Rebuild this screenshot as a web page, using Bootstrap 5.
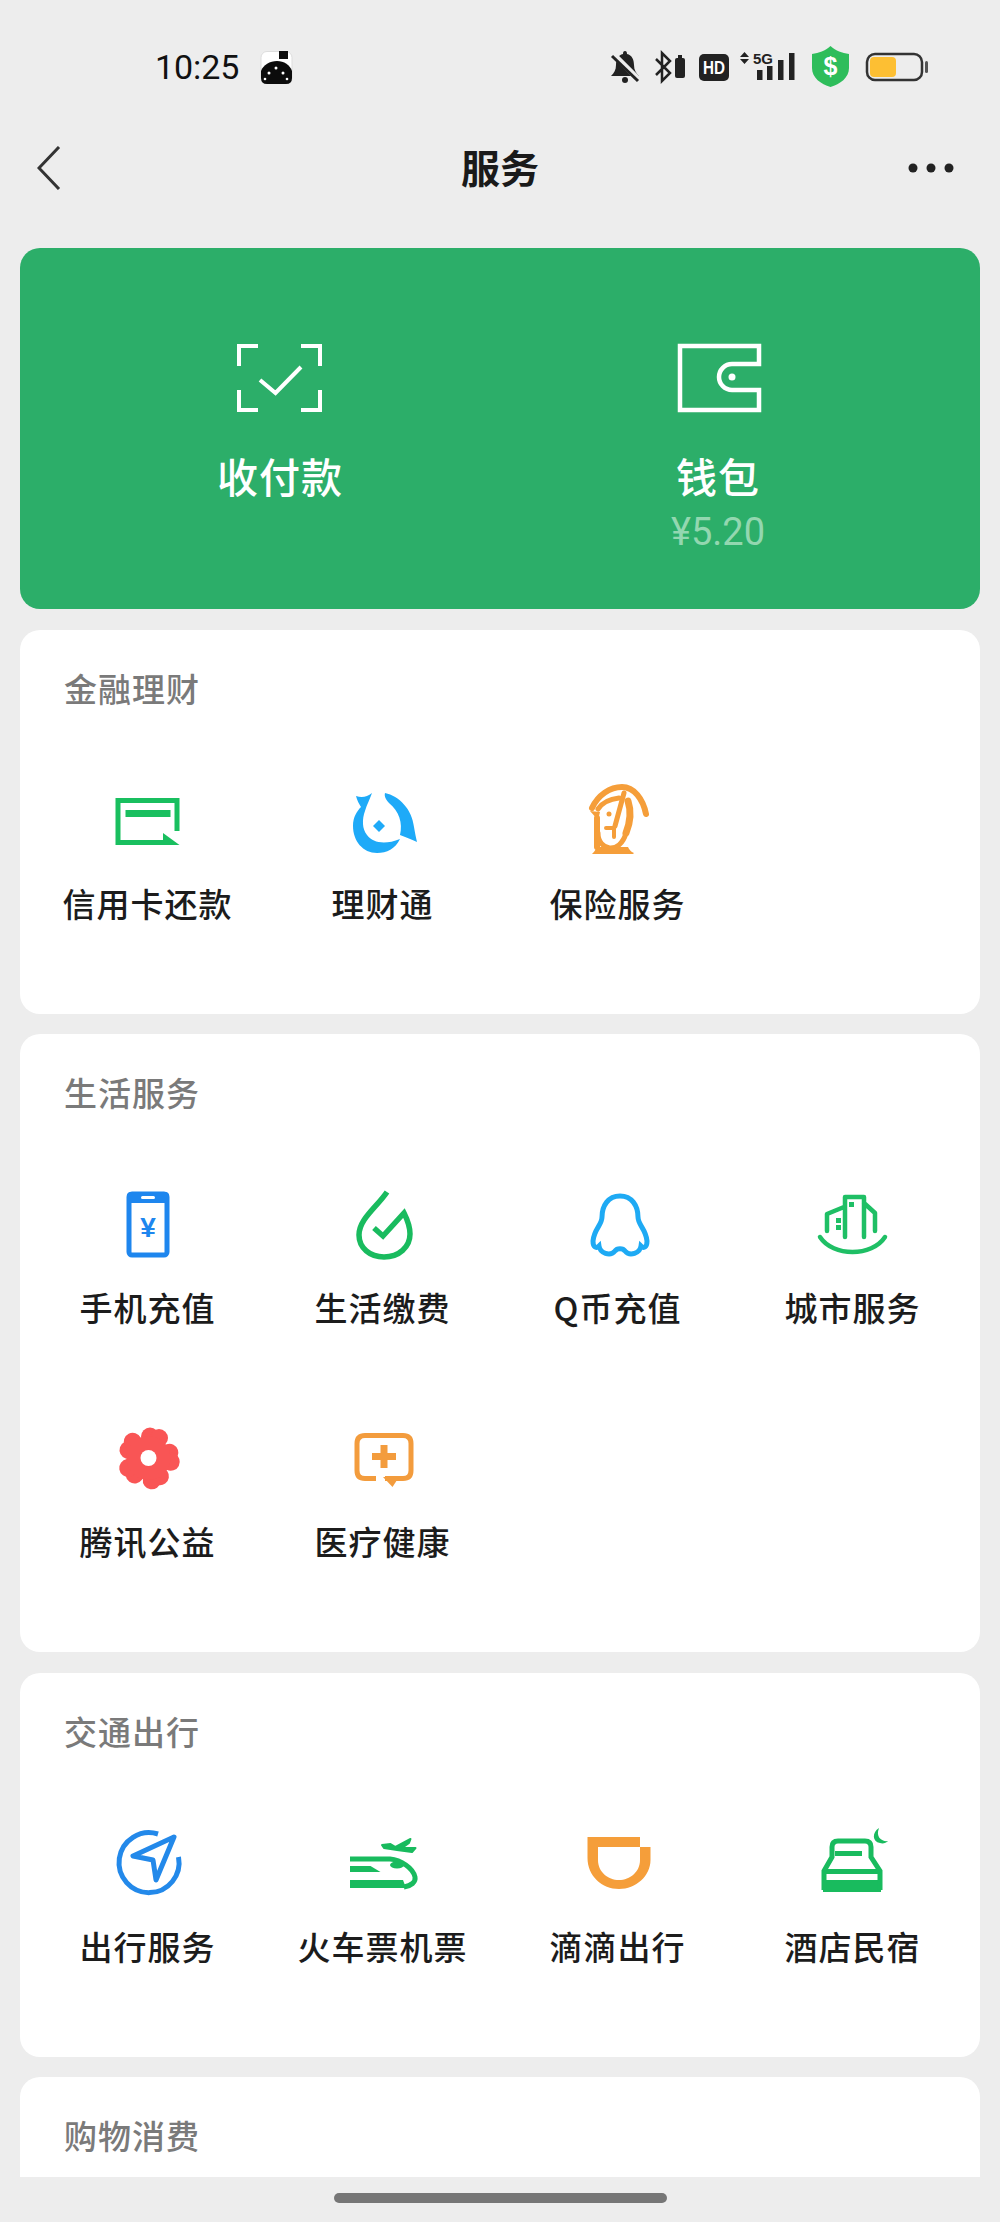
<!DOCTYPE html>
<html lang="zh-CN">
<head>
<meta charset="utf-8">
<title>服务</title>
<link href="https://cdn.jsdelivr.net/npm/bootstrap@5.3.0/dist/css/bootstrap.min.css" rel="stylesheet">
<style>
html,body{height:2222px;overflow:hidden;background:#ededed;}
body{font-family:"Noto Sans CJK SC","Noto Sans",sans-serif;color:#1a1a1a;}
.page-shell{height:2222px;}
.status-strip{height:100px;padding:34px 70px 0 155px;}
.clock-text{font-family:Roboto,"Liberation Sans",sans-serif;font-size:34px;line-height:40px;letter-spacing:-.1px;color:#111;}
.robot-icon{width:33px;height:33px;margin-left:21px;}
.title-strip{height:136px;}
.side-slot{width:120px;}
.side-left{padding-left:37px;}
.side-right{padding-right:46px;}
.page-title{font-size:39px;line-height:44px;font-weight:700;color:#1a1a1a;padding-bottom:5px;}
.cards-area{margin:12px 20px 0;gap:20.5px;overflow:hidden;height:1929px;}
.wallet-panel{background:#2cae69;border-radius:20px;padding:80px 43px 57px 41px;flex:none;color:#fff;}
.panel-label{font-size:41px;line-height:40px;margin-top:27px;font-weight:500;color:#fff;letter-spacing:1px;}
.panel-amount{font-family:Roboto,"Liberation Sans",sans-serif;font-size:38px;line-height:40px;margin-top:17px;color:#93d7b0;}
.svc-panel{border-radius:20px;padding:38px 10px 88px;flex:none;background:#fff;}
.svc-heading{font-size:33px;line-height:40px;margin:0 0 63px 34px;color:#7a7a7a;font-weight:500;letter-spacing:1px;}
.svc-rows{row-gap:79px;}
.svc-icon{width:100px;height:100px;display:block;}
.svc-label{font-size:33px;line-height:40px;margin-top:12px;margin-bottom:3px;white-space:nowrap;font-weight:500;color:#1c1c1c;letter-spacing:1px;}
.home-strip{height:45px;padding-top:16px;}
.home-pill{width:333px;height:10px;border-radius:5px;background:#767676;}
</style>
</head>
<body>
<div class="page-shell d-flex flex-column">

  <div class="status-strip d-flex align-items-center justify-content-between">
    <div class="d-flex align-items-center">
      <span class="clock-text">10:25</span>
      <svg class="robot-icon" viewBox="0 0 33 33">
        <rect x="1" y="0.5" width="31" height="32" rx="6" fill="#fff" stroke="#ddd" stroke-width="1"/>
        <path d="M1 20 C3 14 10 10 17 10 C24 10 30 14 32 20 V27 Q32 33 26 33 H7 Q1 33 1 27Z" fill="#0c0c0c"/>
        <rect x="19" y="0" width="9" height="8" fill="#0c0c0c"/>
        <circle cx="16" cy="17" r="1.500" fill="#fff"/><circle cx="9" cy="22" r="1.500" fill="#fff"/><circle cx="23" cy="22" r="1.500" fill="#fff"/><circle cx="5" cy="28" r="1.300" fill="#fff"/><circle cx="27" cy="28" r="1.300" fill="#fff"/>
      </svg>
    </div>
    <svg width="320" height="50" viewBox="0 0 320 50">
      <path d="M15 9 C16.500 9 17 10 17 12 C22 13 24 18 24 23 C24 28 26 31 29 34 H1 C4 31 6 28 6 23 C6 18 8 13 13 12 C13 10 13.500 9 15 9Z" fill="#222"/>
      <circle cx="15" cy="38" r="3" fill="#222"/>
      <path d="M3 12 L29 38" stroke="#ededed" stroke-width="6"/>
      <path d="M2 14 L28 39" stroke="#222" stroke-width="3"/>
      <path d="M46 17 L60 31 L52 39 V11 L60 19 L46 33" stroke="#222" stroke-width="2.500" fill="none"/>
      <rect x="65" y="16" width="10" height="20" rx="2" fill="#222"/><rect x="68" y="13" width="4" height="4" fill="#222"/>
      <rect x="89" y="12" width="30" height="27" rx="5" fill="#222"/>
      <text x="104" y="32" text-anchor="middle" font-family="Liberation Sans" font-weight="700" font-size="19" textLength="22" lengthAdjust="spacingAndGlyphs" fill="#fff">HD</text>
      <path d="M134.500 10 L139 15 H130Z M130 17 H139 L134.500 22Z" fill="#222"/>
      <text x="143" y="22" font-family="Liberation Sans" font-weight="700" font-size="15" textLength="20" lengthAdjust="spacingAndGlyphs" fill="#222">5G</text>
      <rect x="147" y="28" width="5.500" height="10" fill="#222"/><rect x="157" y="24" width="5.500" height="14" fill="#222"/><rect x="168" y="18" width="5.500" height="20" fill="#222"/><rect x="179" y="11" width="5.500" height="27" fill="#222"/>
      <path d="M220.500 4 C226 9 232 11 239 12 V26 C239 36 230 42 220.500 45 C211 42 202 36 202 26 V12 C209 11 215 9 220.500 4Z" fill="#2ebd5b"/>
      <text x="220.500" y="33" text-anchor="middle" font-family="Liberation Sans" font-weight="700" font-size="25" fill="#fff">$</text>
      <rect x="257" y="12" width="55" height="26" rx="8" fill="none" stroke="#333" stroke-width="2.500"/>
      <rect x="260" y="15" width="26" height="20" rx="4" fill="#fdbf33"/>
      <rect x="315" y="19" width="3" height="12" rx="1.500" fill="#555"/>
    </svg>
  </div>

  <div class="title-strip d-flex align-items-center">
    <div class="side-slot side-left">
      <svg class="d-block" width="24" height="44" viewBox="0 0 24 44"><path d="M22 1 L2 22 L22 43" fill="none" stroke="#333" stroke-width="3"/></svg>
    </div>
    <div class="flex-grow-1 text-center page-title">服务</div>
    <div class="side-slot side-right d-flex justify-content-end gap-2">
      <svg width="46" height="12" viewBox="0 0 46 12"><circle cx="5" cy="6" r="4.500" fill="#222"/><circle cx="23" cy="6" r="4.500" fill="#222"/><circle cx="41" cy="6" r="4.500" fill="#222"/></svg>
    </div>
  </div>

  <main class="cards-area d-flex flex-column">

    <section class="wallet-panel row g-0">
      <div class="col-6 d-flex flex-column align-items-center">
        <svg class="svc-icon" viewBox="0 0 100 100"><g fill="none" stroke="#fff" stroke-width="4"><path d="M9 38 V18 H28 M71 18 H90 V38 M9 62 V82 H28 M71 82 H90 V62"/><path d="M30 52 L45.500 65 L71 39"/></g></svg>
        <div class="panel-label">收付款</div>
      </div>
      <div class="col-6 d-flex flex-column align-items-center">
        <svg class="svc-icon" viewBox="0 0 100 100"><path d="M91 36 V18 H12 V82 H91 V62 H64 A13 13 0 0 1 64 36 Z" fill="none" stroke="#fff" stroke-width="4.500"/><circle cx="64" cy="49" r="3.500" fill="#fff"/></svg>
        <div class="panel-label">钱包</div>
        <div class="panel-amount">¥5.20</div>
      </div>
    </section>

    <section class="svc-panel">
      <h2 class="svc-heading">金融理财</h2>
      <div class="row row-cols-4 g-0 svc-rows">
        <div class="col d-flex flex-column align-items-center">
          <svg class="svc-icon" viewBox="0 0 100 100"><path d="M79 60 V29.500 H20 V71.500 H66" fill="none" stroke="#19bf5f" stroke-width="5"/><rect x="27.500" y="39" width="45" height="7" fill="#19bf5f"/><path d="M65 62 L81.500 74 H65Z" fill="#19bf5f"/></svg>
          <div class="svc-label">信用卡还款</div>
        </div>
        <div class="col d-flex flex-column align-items-center">
          <svg class="svc-icon" viewBox="0 0 100 100"><g fill="#1eaaf8"><path d="M52 22 C66 25 79 38 81 56 C82 62 83 67 84 71 C79 69 73 66 67 64 C70 52 66 40 56 32 C53 29 51 25 52 22Z"/><path d="M23 25 C29 27 34 26 39 22 C37 28 34 33 32 40 C29 48 29 58 34 64 C40 72 52 74 67 68 C62 78 54 82 44 82 C30 82 20 70 20 55 C20 46 24 40 28 36 C26 33 24 29 23 25Z"/><path d="M46 49 L52 55 46 61 40 55Z"/></g></svg>
          <div class="svc-label">理财通</div>
        </div>
        <div class="col d-flex flex-column align-items-center">
          <svg class="svc-icon" viewBox="0 0 100 100"><g fill="none" stroke="#f59e3a" stroke-linecap="round"><path d="M24 37 C30 24 42 16 54 16 C66 16 75 28 78 43" stroke-width="6"/><path d="M30 38 C34 32 42 28 51 27" stroke-width="5"/><path d="M56 22 L47 55" stroke-width="5"/><path d="M38 57 H46 V66" stroke-width="4"/><path d="M29 47 V76" stroke-width="6"/><path d="M60 30 C64 42 62 52 58 62" stroke-width="7"/><path d="M30 62 C30 80 52 84 58 62" stroke-width="5"/></g><g fill="#f59e3a"><path d="M22 40 L32 41 L30 49Z"/><circle cx="41" cy="43" r="2.500"/><path d="M24 83 C27 80 28 78 28 76 H60 C61 78 63 81 66 82 L65 83Z"/></g></svg>
          <div class="svc-label">保险服务</div>
        </div>
      </div>
    </section>

    <section class="svc-panel">
      <h2 class="svc-heading">生活服务</h2>
      <div class="row row-cols-4 g-0 svc-rows">
        <div class="col d-flex flex-column align-items-center">
          <svg class="svc-icon" viewBox="0 0 100 100"><rect x="31" y="19" width="38" height="61" rx="3" fill="#fff" stroke="#1e86ee" stroke-width="5"/><path d="M29 28 V21 Q29 17 33 17 H67 Q71 17 71 21 V28Z" fill="#1e86ee"/><rect x="43" y="21" width="14" height="3" rx="1.500" fill="#fff"/><text x="50" y="62" text-anchor="middle" font-family="Liberation Sans" font-weight="700" font-size="28" fill="#1e86ee">¥</text></svg>
          <div class="svc-label">手机充值</div>
        </div>
        <div class="col d-flex flex-column align-items-center">
          <svg class="svc-icon" viewBox="0 0 100 100"><path d="M54 17 C44 32 26 44 26 60 C26 73 37 82 51 82 C66 82 77 72 77 59 C77 52 74 44 71 38 L50 61 L41 53" fill="none" stroke="#19bb5e" stroke-width="5.500"/></svg>
          <div class="svc-label">生活缴费</div>
        </div>
        <div class="col d-flex flex-column align-items-center">
          <svg class="svc-icon" viewBox="0 0 100 100"><path d="M52 21 C40 21 34 31 34 42 C34 50 26 54 25 66 C25 72 28 74 31 71 C32 78 42 82 47 76 C49 73 55 73 57 76 C62 82 72 78 73 71 C76 74 79 72 79 66 C78 54 70 50 70 42 C70 31 64 21 52 21Z" fill="none" stroke="#1eaaf4" stroke-width="5"/></svg>
          <div class="svc-label">Q币充值</div>
        </div>
        <div class="col d-flex flex-column align-items-center">
          <svg class="svc-icon" viewBox="0 0 100 100"><g fill="none" stroke="#1fbf65" stroke-width="4.500" stroke-linecap="round" stroke-linejoin="round"><path d="M17 62 C30 82 69 82 82 62"/><path d="M42 62 V22 H61 V62 M61 28 L72 38 V56 M24 56 V39 L41 32"/></g><g fill="#1fbf65"><rect x="46" y="27" width="5" height="5"/><rect x="33" y="43" width="5" height="5"/><rect x="33" y="50" width="5" height="5"/></g></svg>
          <div class="svc-label">城市服务</div>
        </div>
        <div class="col d-flex flex-column align-items-center">
          <svg class="svc-icon" viewBox="0 0 100 100"><defs><g id="flower-petal"><circle cx="52" cy="27.500" r="9"/><circle cx="61" cy="29" r="9"/></g></defs><g fill="#f95555"><use href="#flower-petal"/><use href="#flower-petal" transform="rotate(72 50.500 49)"/><use href="#flower-petal" transform="rotate(144 50.500 49)"/><use href="#flower-petal" transform="rotate(216 50.500 49)"/><use href="#flower-petal" transform="rotate(288 50.500 49)"/><circle cx="50.500" cy="49" r="22"/></g><circle cx="50.500" cy="49" r="8" fill="#fff"/></svg>
          <div class="svc-label">腾讯公益</div>
        </div>
        <div class="col d-flex flex-column align-items-center">
          <svg class="svc-icon" viewBox="0 0 100 100"><path d="M43 69.500 H32 Q24 69.500 24 61.500 V34.500 Q24 26.500 32 26.500 H70 Q78 26.500 78 34.500 V61.500 Q78 69.500 70 69.500 H52" fill="none" stroke="#f39c3d" stroke-width="5"/><path d="M50 68 H66 L59.500 78Z" fill="#f39c3d"/><path d="M39 47.500 H63 M51 36 V59" stroke="#f39c3d" stroke-width="7"/></svg>
          <div class="svc-label">医疗健康</div>
        </div>
      </div>
    </section>

    <section class="svc-panel">
      <h2 class="svc-heading">交通出行</h2>
      <div class="row row-cols-4 g-0 svc-rows">
        <div class="col d-flex flex-column align-items-center">
          <svg class="svc-icon" viewBox="0 0 100 100"><g fill="none" stroke="#2389ea" stroke-width="5" stroke-linejoin="round"><path d="M60 20 A30 30 0 1 0 80.500 43"/><path d="M76 23 L35 42 L55 46 L58 66 Z"/></g></svg>
          <div class="svc-label">出行服务</div>
        </div>
        <div class="col d-flex flex-column align-items-center">
          <svg class="svc-icon" viewBox="0 0 100 100"><g fill="#19bb5e"><path d="M49 31 L57.500 30 L62.500 33 L77.500 25 L76 29 L69 34 L82.500 34 L79 38 L64 36 L51 34Z" stroke="#19bb5e" stroke-width="2" stroke-linejoin="round"/><path d="M17 52 H37.500 L47.500 58 H17Z"/><path d="M17 66 H70 L73 74 H17Z"/><ellipse cx="64" cy="51" rx="7" ry="3.500"/></g><path d="M17 45 H57 C68 46 80 54 82 63 C83 68 78 72 71 73" fill="none" stroke="#19bb5e" stroke-width="5"/></svg>
          <div class="svc-label">火车票机票</div>
        </div>
        <div class="col d-flex flex-column align-items-center">
          <svg class="svc-icon" viewBox="0 0 100 100"><path fill-rule="evenodd" d="M19.500 23 H72 V33 H82.500 V46 C82.500 62 68 75 51 75 C34 75 19.500 62 19.500 44 Z M30 33 V46 C30 58 40 66 51 66 C62 66 72 58 72 46 V33 Z" fill="#f59e3a"/></svg>
          <div class="svc-label">滴滴出行</div>
        </div>
        <div class="col d-flex flex-column align-items-center">
          <svg class="svc-icon" viewBox="0 0 100 100"><g fill="#19bb5e"><path d="M76 14 C69 18 69 28 77 29 C80 30 83 29 85 27 C80 28 72 24 76 14Z"/><path d="M20 66 H78 V78 H20Z"/></g><g fill="none" stroke="#19bb5e" stroke-width="5"><path d="M21 76 V57 L29 43 V33 Q29 27 35 27 H62 Q68 27 68 33 V43 L77 57 V76"/><path d="M32 39.500 H59 M21 57.500 H77"/></g></svg>
          <div class="svc-label">酒店民宿</div>
        </div>
      </div>
    </section>

    <section class="svc-panel">
      <h2 class="svc-heading">购物消费</h2>
    </section>
  </main>

  <div class="home-strip d-flex justify-content-center"><div class="home-pill"></div></div>
</div>
<script src="https://cdn.jsdelivr.net/npm/bootstrap@5.3.0/dist/js/bootstrap.bundle.min.js"></script>
</body>
</html>
